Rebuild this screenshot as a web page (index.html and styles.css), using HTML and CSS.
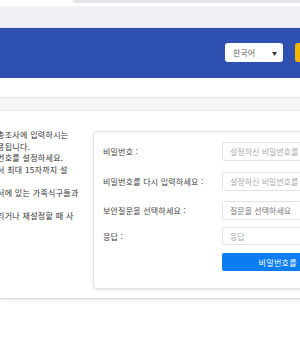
FILE: index.html
```html
<!DOCTYPE html>
<html lang="ko">
<head>
<meta charset="utf-8">
<link rel="stylesheet" href="styles.css">
</head>
<body>
<div class="topstrip"><div class="topbar"></div></div>
<div class="grayband"></div>
<header class="header">
  <div class="lang">
    <span class="lang-text">한국어</span>
    <span class="lang-arrow">▼</span>
  </div>
  <div class="yellow"></div>
</header>
<nav class="nav"></nav>
<div class="subband"></div>
<main class="content">
  <div class="intro">
    <div class="line">총조사에 입력하시는</div>
    <div class="line">용됩니다.</div>
    <div class="line">번호를 설정하세요.</div>
    <div class="line">서 최대 15자까지 설</div>
    <div class="line">&nbsp;</div>
    <div class="line">서에 있는 가족식구들과</div>
    <div class="line">&nbsp;</div>
    <div class="line">리거나 재설정할 때 사</div>
  </div>
  <section class="card">
    <div class="row r1">
      <div class="label">비밀번호 :</div>
      <div class="field ph">설정하신 비밀번호를 입력하세요</div>
    </div>
    <div class="row r2">
      <div class="label">비밀번호를 다시 입력하세요 :</div>
      <div class="field ph">설정하신 비밀번호를 다시 입력하세요</div>
    </div>
    <div class="row r3">
      <div class="label">보안질문을 선택하세요 :</div>
      <div class="field sel">질문을 선택하세요</div>
    </div>
    <div class="row r4">
      <div class="label">응답 :</div>
      <div class="field ph short">응답</div>
    </div>
    <div class="row r5">
      <div class="label"></div>
      <div class="btn">비밀번호를 재설정</div>
    </div>
  </section>
</main>
</body>
</html>
```

FILE: styles.css
```css
html, body {
  margin: 0;
  padding: 0;
  overflow: hidden;
  background: #ffffff;
}
body {
  width: 300px;
  height: 350px;
  font-family: "Noto Sans CJK KR", "Noto Sans", sans-serif;
  font-size: 8px;
  color: #3a3a3a;
}
.topstrip {
  height: 6px;
  background: #ffffff;
}
.topbar {
  margin-left: 73px;
  height: 3px;
  background: #e4e5e8;
  border-bottom-left-radius: 4px;
}
.grayband {
  height: 21px;
  background: #f0f1f4;
  border-bottom: 1px solid #dde3ee;
}
.header {
  height: 50px;
  background: #2e51b1;
  display: flex;
  align-items: flex-start;
  padding-top: 15px;
  box-sizing: border-box;
  padding-left: 225px;
  width: 340px;
}
.lang {
  width: 58px;
  height: 19px;
  background: #ffffff;
  border-radius: 3px;
  display: flex;
  align-items: center;
  justify-content: space-between;
  padding: 0 6px 0 8px;
  box-sizing: border-box;
  flex: none;
}
.lang-text {
  color: #666;
  font-size: 8px;
}
.lang-arrow {
  color: #333;
  font-size: 5px;
}
.yellow {
  margin-left: 12px;
  width: 30px;
  height: 19px;
  background: #f6b600;
  border-radius: 3px;
  flex: none;
}
.nav {
  height: 19px;
  background: #ffffff;
  border-bottom: 1px solid #e6e6e6;
}
.subband {
  height: 12px;
  background: #f6f6f6;
}
.content {
  height: 189px;
  box-sizing: border-box;
  border-top: 1px solid #ececec;
  border-bottom: 1px solid #dedede;
  box-shadow: 0 2px 3px rgba(0, 0, 0, 0.08);
  display: flex;
  align-items: flex-start;
  width: 360px;
  background: #fff;
}
.intro {
  margin-left: -3px;
  margin-top: 18px;
  width: 96px;
  flex: none;
  line-height: 11.6px;
  letter-spacing: 0.3px;
  white-space: nowrap;
  color: #333;
}
.card {
  margin-top: 20px;
  width: 240px;
  height: 158px;
  box-sizing: border-box;
  border: 1px solid #e2e2e2;
  border-radius: 4px;
  box-shadow: 0 1px 3px rgba(0, 0, 0, 0.1);
  padding: 10px 0 0 9px;
  flex: none;
}
.row {
  display: flex;
  align-items: center;
}
.label {
  width: 119px;
  flex: none;
  color: #444;
  letter-spacing: 0.2px;
}
.field {
  width: 110px;
  height: 19px;
  box-sizing: border-box;
  border: 1px solid #e3e3e3;
  border-radius: 2px;
  padding-left: 7px;
  display: flex;
  align-items: center;
  white-space: nowrap;
  overflow: hidden;
}
.ph {
  color: #ababab;
}
.sel {
  color: #777;
}
.short {
  height: 18px;
}
.r1 { margin-bottom: 11px; }
.r2 { margin-bottom: 10px; }
.r3 { margin-bottom: 7px; }
.r4 { margin-bottom: 8px; }
.btn {
  width: 142px;
  height: 18px;
  background: #0b7df3;
  border-radius: 2px;
  color: #ffffff;
  display: flex;
  align-items: center;
  justify-content: center;
  white-space: nowrap;
  letter-spacing: 0.3px;
  word-spacing: 5px;
  flex: none;
}
```
